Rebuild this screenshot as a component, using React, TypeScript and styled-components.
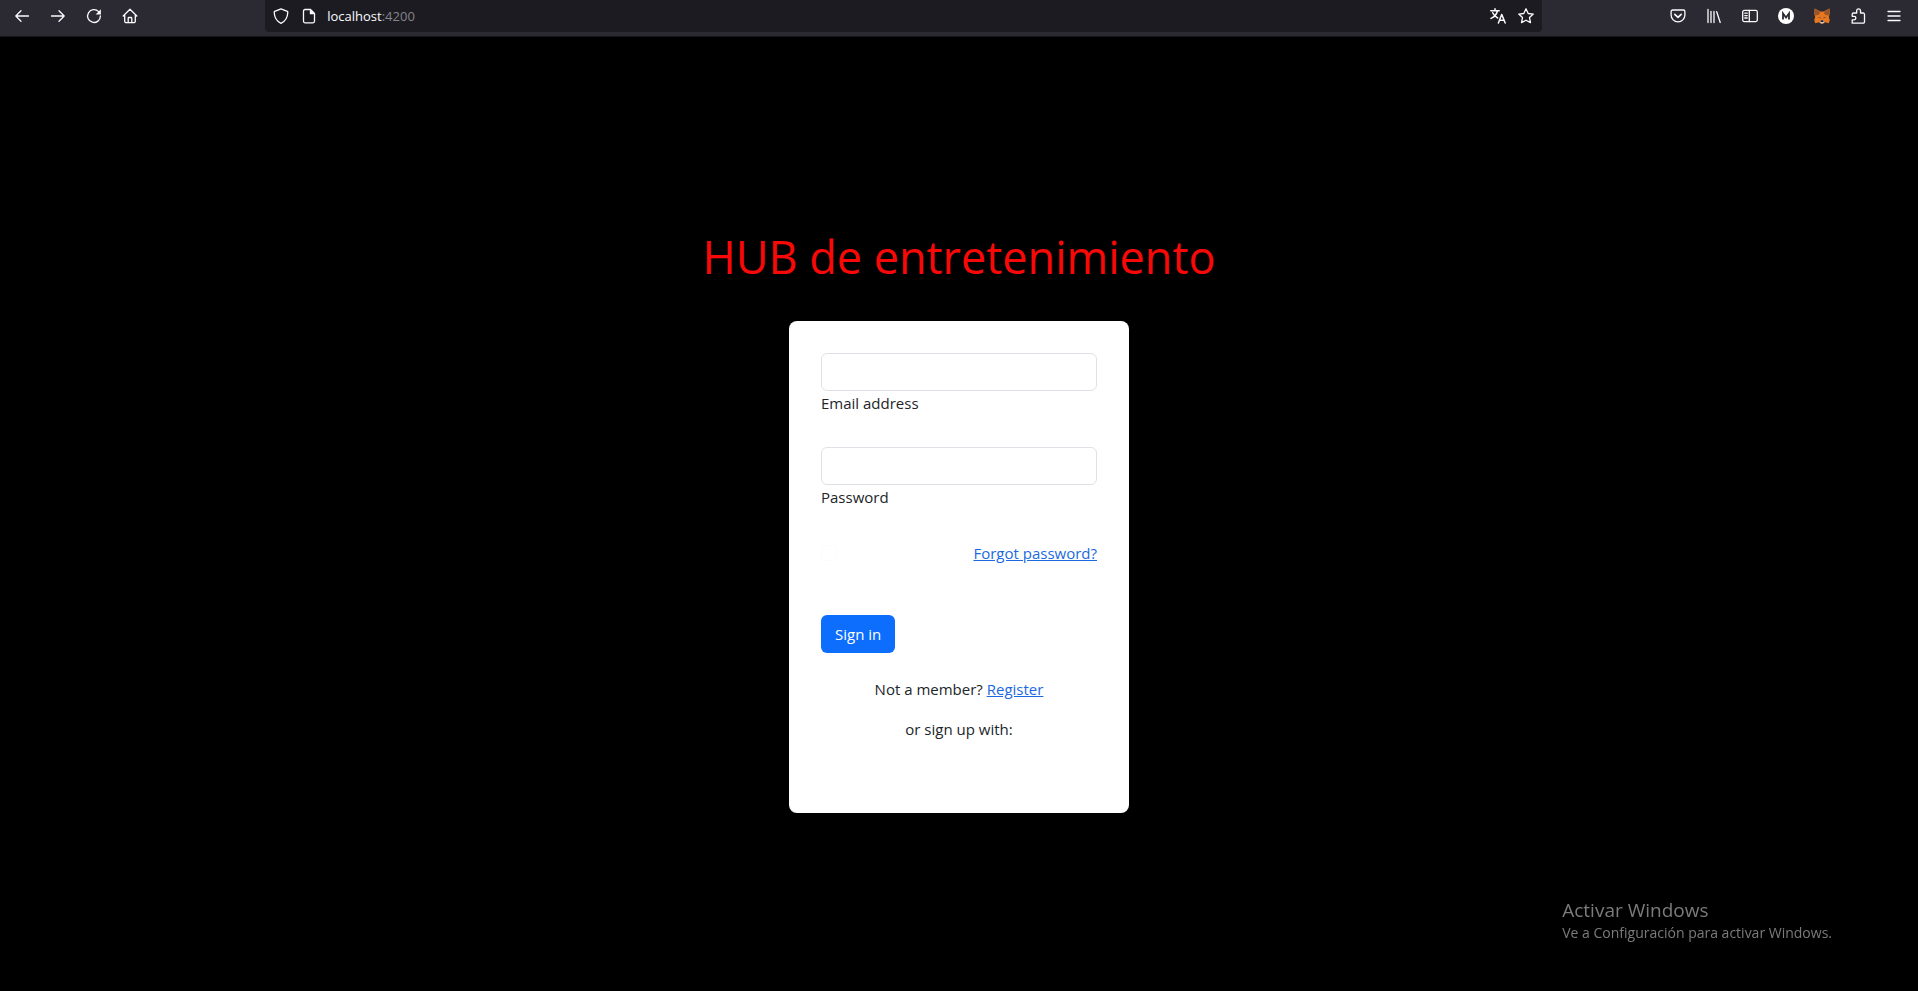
import React from 'react';
import styled, { createGlobalStyle } from 'styled-components';

const GlobalStyle = createGlobalStyle`
  *, *::before, *::after { box-sizing: border-box; }
  html, body { margin: 0; background: #000; }
  body {
    font-family: 'Open Sans', 'Noto Sans', sans-serif;
    font-size: 15px;
    line-height: 24px;
    color: #212529;
  }
`;

const Page = styled.div`
  min-height: 100vh;
  display: flex;
  flex-direction: column;
`;

const Toolbar = styled.header`
  display: flex;
  align-items: flex-start;
  height: 37px;
  padding: 0 14px 0 12px;
  background: #2b2a33;
  border-bottom: 1px solid #15141a;
`;

const ToolGroup = styled.nav<{ $grow: number; $end?: boolean }>`
  flex: ${(p) => p.$grow} 1 0;
  display: flex;
  gap: 16px;
  padding: 6px 0;
  justify-content: ${(p) => (p.$end ? 'flex-end' : 'flex-start')};
`;

const IconButton = styled.button`
  display: grid;
  place-items: center;
  width: 20px;
  height: 20px;
  padding: 0;
  border: 0;
  background: none;
  color: #fbfbfe;
  cursor: pointer;

  svg { display: block; }
`;

const AddressBar = styled.div`
  flex: 0 0 67.5%;
  display: flex;
  align-items: center;
  gap: 8px;
  height: 32px;
  padding: 0 6px;
  border-radius: 0 0 4px 4px;
  background: #1c1b22;
`;

const Url = styled.span`
  flex: 1;
  font-size: 13px;
  color: #fbfbfe;
`;

const Port = styled.span`
  color: #85848b;
`;

const Main = styled.main`
  flex: 1;
  display: flex;
  flex-direction: column;
  align-items: center;
  padding: 188px 16px 0;
`;

const Title = styled.h1`
  margin: 0 0 32px;
  font-size: 45px;
  font-weight: 400;
  line-height: 64px;
  color: #f90808;
`;

const Card = styled.form`
  width: 340px;
  max-width: 100%;
  padding: 32px 32px 72px;
  border-radius: 8px;
  background: #fff;
`;

const Field = styled.div`
  display: flex;
  flex-direction: column;
  margin-bottom: 32px;
`;

const Input = styled.input`
  height: 38px;
  padding: 6px 12px;
  border: 1px solid #dee2e6;
  border-radius: 6px;
  background: #fff;
  font: inherit;
`;

const OptionsRow = styled.div`
  display: flex;
  align-items: center;
  justify-content: space-between;
  margin-bottom: 50px;
`;

const Checkbox = styled.input`
  appearance: none;
  width: 16px;
  height: 16px;
  margin: 0;
  border: 1px solid #fcfcfc;
  border-radius: 4px;
`;

const Link = styled.a`
  color: #1b6ae0;
  text-decoration: underline;
`;

const SubmitButton = styled.button`
  display: block;
  height: 38px;
  margin-bottom: 24px;
  padding: 0 14px;
  border: 0;
  border-radius: 6px;
  background: #0d6efd;
  color: #fff;
  font: inherit;
  cursor: pointer;
`;

const Note = styled.p`
  margin: 0 0 16px;
  text-align: center;

  &:last-child { margin-bottom: 0; }
`;

const Watermark = styled.aside`
  position: fixed;
  right: 86px;
  bottom: 48px;
  color: #7b7b7b;
  font-size: 14px;
  line-height: 20px;
`;

const WatermarkTitle = styled.div`
  font-size: 19px;
  line-height: 26px;
`;

const Icon = ({ children }: { children: React.ReactNode }) => (
  <svg
    width="16"
    height="16"
    viewBox="0 0 16 16"
    fill="none"
    stroke="currentColor"
    strokeWidth="1.3"
    strokeLinecap="round"
    strokeLinejoin="round"
    aria-hidden="true"
  >
    {children}
  </svg>
);

const Tool = ({ label, children }: { label: string; children: React.ReactNode }) => (
  <IconButton type="button" aria-label={label}>
    <Icon>{children}</Icon>
  </IconButton>
);

export default function App() {
  return (
    <Page>
      <GlobalStyle />
      <Toolbar>
        <ToolGroup $grow={7} aria-label="Navigation">
          <Tool label="Back"><path d="M14.5 8H1.8M7 2.8 1.8 8 7 13.2" /></Tool>
          <Tool label="Forward"><path d="M1.5 8h12.7M9 2.8 14.2 8 9 13.2" /></Tool>
          <Tool label="Reload">
            <path d="M12.6 3.6A6.4 6.4 0 1 0 14.4 8" />
            <path d="M14.9 1.2v5.2H9.700z" fill="currentColor" stroke="none" />
          </Tool>
          <Tool label="Home">
            <path d="M1.2 8 8 1.3 14.8 8M2.7 7v6.2a1.5 1.5 0 0 0 1.5 1.5h7.6a1.5 1.5 0 0 0 1.5-1.5V7" />
            <path d="M6.2 14.5v-4.2a.8.8 0 0 1 .8-.8h2a.8.8 0 0 1 .8.8v4.2" />
          </Tool>
        </ToolGroup>
        <AddressBar>
          <Tool label="Tracking protection">
            <path d="M8 .9 14.3 3.4a.9.9 0 0 1 .5.9C14.6 9.6 12.2 13.4 8 15.3 3.8 13.4 1.4 9.6 1.2 4.3a.9.9 0 0 1 .5-.9z" />
          </Tool>
          <Tool label="Site information">
            <path d="M9.5 1.500H4A1.500 1.500 0 0 0 2.500 3v10.300A1.500 1.500 0 0 0 4 14.800h8a1.500 1.500 0 0 0 1.500-1.500V5.500z" />
            <path d="M8.800 1.200v5h5z" fill="currentColor" stroke="none" />
          </Tool>
          <Url>localhost<Port>:4200</Port></Url>
          <Tool label="Translate page">
            <path
              d="M.8 2.800h8.400M5 .8v2M7.400 3C6.600 6.400 4.200 9 1 10.400M2.700 4.800c1 2.400 2.800 4.200 5 5.200M8.400 15l3.300-8.600L15.200 15M9.600 12.300h4.400"
              strokeWidth="1.500"
            />
          </Tool>
          <Tool label="Bookmark this page">
            <path d="m8 .8 2.200 4.700 5.100.6-3.800 3.500 1 5L8 12.200l-4.500 2.400 1-5L.7 6.100l5.100-.6z" />
          </Tool>
        </AddressBar>
        <ToolGroup $grow={10} $end aria-label="Tools">
          <Tool label="Save to Pocket">
            <path d="M2.600 2h10.800a1.500 1.500 0 0 1 1.500 1.500V7a6.900 6.900 0 0 1-13.800 0V3.500A1.500 1.500 0 0 1 2.600 2z" />
            <path d="M4.800 6.300 8 9.300l3.200-3" strokeWidth="1.600" />
          </Tool>
          <Tool label="Library">
            <path d="M2 1.500v13M5 3.500v11M8 3.500v11M10.700 3.700l3.500 10.800" />
          </Tool>
          <Tool label="Sidebar">
            <rect x=".7" y="2.400" width="14.600" height="11.200" rx="1.500" />
            <path d="M7.300 2.400v11.200M2.800 5.200h2.400M2.800 7.600h2.400M2.800 10h2.400" />
          </Tool>
          <Tool label="Account">
            <circle cx="8" cy="8" r="8" fill="#fff" stroke="none" />
            <path d="M5 11.500V5.500L8 9.500l3-4v6" stroke="#2b2a33" strokeWidth="1.800" strokeLinejoin="miter" strokeLinecap="butt" />
          </Tool>
          <Tool label="MetaMask">
            <g stroke="none">
              <path d="M.6.6 6.400 3.500h3.200L15.400.6l.4 5-1 3.400 1 3-1 3.200-3.800-.9L9.300 15.600H6.700L5 14.300l-3.800.9L.2 12l1-3-1-3.400z" fill="#e8771f" />
              <path d="M.6.6 6.400 4 5 6.800l-3.600.6L.2 5.200zM15.400.6 9.600 4 11 6.800l3.600.6 1.200-2.200z" fill="#9a562a" />
              <path d="M3.600 9l2.700.4.4 1.200zM12.400 9l-2.700.4-.4 1.200z" fill="#303542" />
              <path d="M6 12.500h4l.2 1.800-1.200 1.200H7l-1.200-1.200z" fill="#d5c8bd" />
              <path d="M6.700 12.300h2.600l.2 1.600h-3z" fill="#222" />
            </g>
          </Tool>
          <Tool label="Extensions">
            <path d="M2.200 15.200h11a1.300 1.300 0 0 0 1.300-1.300V6.300A1.300 1.300 0 0 0 13.200 5H10.500V2.800a1.900 1.900 0 0 0-3.800 0V5H3.500a1.300 1.300 0 0 0-1.300 1.300v2h1.900a1.800 1.800 0 0 1 0 3.600H2.200z" />
          </Tool>
          <Tool label="Open application menu">
            <path d="M2 3.500h12M2 8h12M2 12.500h12" />
          </Tool>
        </ToolGroup>
      </Toolbar>
      <Main>
        <Title>HUB de entretenimiento</Title>
        <Card onSubmit={(e) => e.preventDefault()}>
          <Field>
            <Input id="email" type="email" />
            <label htmlFor="email">Email address</label>
          </Field>
          <Field>
            <Input id="password" type="password" />
            <label htmlFor="password">Password</label>
          </Field>
          <OptionsRow>
            <Checkbox type="checkbox" aria-label="Remember me" />
            <Link href="#forgot">Forgot password?</Link>
          </OptionsRow>
          <SubmitButton type="submit">Sign in</SubmitButton>
          <Note>Not a member? <Link href="#register">Register</Link></Note>
          <Note>or sign up with:</Note>
        </Card>
      </Main>
      <Watermark>
        <WatermarkTitle>Activar Windows</WatermarkTitle>
        Ve a Configuración para activar Windows.
      </Watermark>
    </Page>
  );
}
